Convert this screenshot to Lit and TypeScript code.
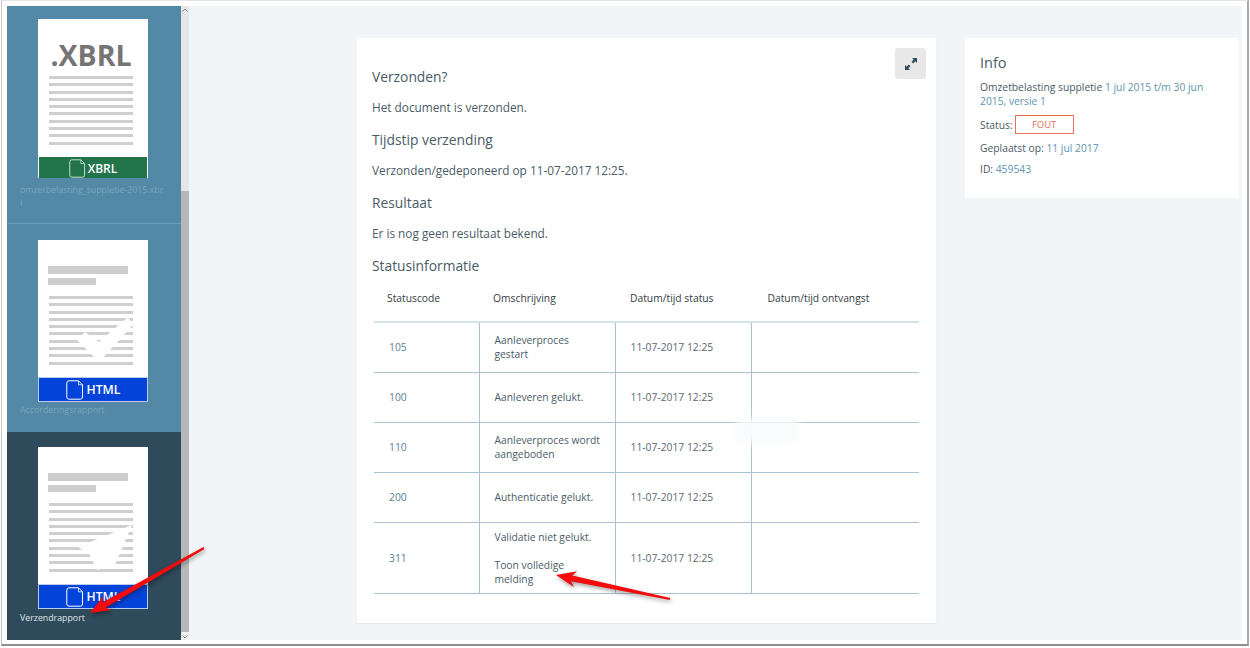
import { LitElement, html, css, svg } from "lit";
import { customElement } from "lit/decorators.js";

function arrow(tx: number, ty: number, x: number, y: number) {
  const dx = x - tx, dy = y - ty;
  const len = Math.hypot(dx, dy);
  const ux = dx / len, uy = dy / len;
  const nx = -uy, ny = ux;
  const p = (along: number, side: number) =>
    `${(tx + ux * along + nx * side).toFixed(1)},${(ty + uy * along + ny * side).toFixed(1)}`;
  const h = len - 19;
  return [p(0, 1), p(h + 3, 3), p(h - 1, 8), p(len, 0), p(h - 1, -8), p(h + 3, -3), p(0, -1)].join(" ");
}

const FILE = svg`<path d="M3 .8h9.5l4 4V17a2.2 2.2 0 0 1-2.2 2.2H3A2.2 2.2 0 0 1 .8 17V3A2.2 2.2 0 0 1 3 .8Z" fill="none" stroke="currentColor" stroke-width="1"/><path d="M12.5 .8v4h4" fill="none" stroke="currentColor" stroke-width=".8"/>`;

@customElement("app-root")
export class AppRoot extends LitElement {
  static styles = css`
    :host { display: block; width: 1250px; height: 648px; position: relative; overflow: hidden; background: #fff;
      font-family: "Open Sans", sans-serif; color: #4a5b67; font-size: 12px; }
    .window { box-sizing: border-box; width: 1248px; height: 646px; margin-left: 1px; padding: 5px 5px 4px 5px; background: #fff;
      border: 1px solid #c4c4c4; border-top-color: #e4e4e4; border-bottom: 2px solid #8f8f8f; border-right: 2px solid #a8a8a8; display: flex; }
    .side { width: 174px; flex: none; display: flex; flex-direction: column; background: #5389a6; }
    .item { box-sizing: border-box; padding: 13px 0 0 31px; color: #77a5bc; font-size: 8.8px; line-height: 13px; }
    .item.one { height: 218px; border-bottom: 1px solid #6c9cb6; }
    .item.two { height: 208px; padding-top: 16px; }
    .item.three { flex: 1; padding-top: 15px; background: #2f4a5b; color: #dfe7ec; }
    .label { margin: 6px 0 0 -18px; width: 145px; word-break: break-all; }
    .two .label { margin-top: 3px; }
    .three .label { margin-top: 4px; }
    .thumb { position: relative; width: 110px; height: 159px; background: #fff; box-sizing: border-box; display: flex; flex-direction: column; }
    .two .thumb, .three .thumb { height: 161px; }
    .doc { flex: 1; padding: 0 15px 0 11px; display: flex; flex-direction: column; }
    .ext { font-weight: 700; font-size: 28.5px; line-height: 30px; color: #757575; text-align: center; margin: 21px -15px 0 -11px; padding-right: 4px; height: 36px; }
    .t1 { height: 8px; width: 80px; background: #cdcdcd; margin-top: 26px; margin-left: -1px; }
    .t2 { height: 7px; width: 48px; background: #cdcdcd; margin: 4px 0 11px -1px; }
    .lines { display: flex; flex-direction: column; gap: 4.3px; }
    .lines i { display: block; height: 3px; background: #cfcfcf; }
    .bar { height: 23px; margin: 0 1px; flex: none; display: flex; align-items: center; justify-content: center; gap: 3px;
      color: #fff; font-weight: 600; }
    .bar.x { background: #22744a; height: 21px; font-size: 12px; padding-top: 2px; box-sizing: border-box; gap: 2px; }
    .bar.h { background: #0343d9; outline: 1px solid #b7cbf0; font-size: 12.2px; padding-bottom: 1px; box-sizing: border-box; }
    .bar svg { width: 18px; height: 20px; flex: none; }
    .bar.h svg { margin-top: 1px; }
    .bar.x svg { color: #cfe3d8; width: 17px; height: 19px; margin-top: -1px; }
    .check { position: absolute; left: 0; top: 0; width: 110px; height: 161px; pointer-events: none; }
    .scroll { width: 8px; flex: none; background: #e6e6e6; display: flex; flex-direction: column; }
    .sb-top { height: 185px; display: flex; justify-content: center; }
    .sb-bot { flex: 1; background: #f1f1f1; display: flex; justify-content: center; align-items: center; }
    .sb-top svg, .sb-bot svg { width: 6px; height: 4px; color: #8a8a8a; margin-top: 2px; }
    .thumbbar { height: 441px; background: #b7b7b7; }
    .main { flex: 1; background: #f1f5f8; display: flex; padding: 32px 0 17px 168px; gap: 29px; align-items: flex-start; }
    .panel { box-sizing: border-box; width: 579px; height: 585px; background: #fff; padding: 28.5px 15px 0; position: relative; box-shadow: 0 1px 1px #e4e7e9; }
    .expand { position: absolute; right: 10px; top: 10px; width: 31px; height: 31px; border-radius: 3px; background: #e8e8e8; display: flex; align-items: center; justify-content: center; }
    .expand svg { width: 14px; height: 14px; color: #2f4a5b; }
    h2 { font-weight: 400; font-size: 13.8px; line-height: 20px; margin: 0 0 10px; color: #4a5b67; }
    p { margin: 0 0 13.2px; line-height: 20px; font-size: 11.8px; }
    h2:last-of-type { margin-bottom: 11px; }
    table { border-collapse: collapse; table-layout: fixed; width: 545px; margin: -5px 0 0 2px; font-size: 10.3px; line-height: 14px; }
    th { font-weight: 400; text-align: left; height: 32px; padding: 0 10px 7px 13px; color: #333d44; border-bottom: 2px solid #d5e2ea; }
    th:nth-child(2) { padding-left: 14px; }
    th:nth-child(3) { padding-left: 15px; }
    th:nth-child(4) { padding-left: 16.5px; }
    td { padding: 0 15px; height: 49px; border-bottom: 1px solid #a9c2d0; border-left: 1px solid #a9c2d0; box-sizing: border-box; }
    td:nth-child(2) { padding-right: 13px; }
    td:first-child { border-left: 0; color: #587f95; }
    td.time { color: #5a6972; }
    td div + div { margin-top: 14px; }
    .info { box-sizing: border-box; width: 274px; height: 160px; background: #fff; padding: 15px; font-size: 10.3px; line-height: 14px; }
    .info h3 { font-weight: 400; font-size: 14.5px; line-height: 20px; margin: 0 0 7px; color: #4a5b67; }
    .info a { color: #5f93ae; }
    .info div { margin-bottom: 7px; }
    .info .status { display: flex; align-items: center; gap: 2px; margin-bottom: 7px; }
    .fout { box-sizing: border-box; display: inline-block; width: 59px; height: 19px; line-height: 17px; text-align: center; border: 1px solid #e8705c; color: #e8705c; font-size: 9.5px; }
    .over { position: absolute; inset: 0; width: 1250px; height: 648px; pointer-events: none; }
    .smudge { position: absolute; left: 735px; top: 419px; width: 64px; height: 24px; background: #fafbfc; filter: blur(4px); }
    .shadow { filter: drop-shadow(1px 2px 2px rgba(0,0,0,.4)); }
  `;

  private thumb(kind: "x" | "h", title: boolean, check: string) {
    return html`<div class="thumb">
      <div class="doc">
        ${title ? html`<div class="t1"></div><div class="t2"></div>` : html`<div class="ext">.XBRL</div>`}
        <div class="lines">${Array.from({ length: 10 }).map(() => html`<i></i>`)}</div>
      </div>
      ${check ? html`<svg class="check" viewBox="0 0 110 161">${svg`<path d=${check} fill="#fff"/>`}</svg>` : ""}
      <div class="bar ${kind}"><svg viewBox="0 0 18 20">${FILE}</svg>${kind === "x" ? "XBRL" : "HTML"}</div>
    </div>`;
  }

  render() {
    const rows: [string, string[]][] = [
      ["105", ["Aanleverproces gestart"]],
      ["100", ["Aanleveren gelukt."]],
      ["110", ["Aanleverproces wordt aangeboden"]],
      ["200", ["Authenticatie gelukt."]],
      ["311", ["Validatie niet gelukt.", "Toon volledige melding"]],
    ];
    return html`
      <div class="window">
        <div class="side">
          <div class="item one">${this.thumb("x", false, "")}<div class="label">omzetbelasting_suppletie-2015.xbrl</div></div>
          <div class="item two">${this.thumb("h", true, "M39 100 47 92 61 102 90 77 95 85 61 122Z")}<div class="label">Accorderingsrapport</div></div>
          <div class="item three">${this.thumb("h", true, "M40 100 94 78 77 118 59 123 52 108Z")}<div class="label">Verzendrapport</div></div>
        </div>
        <div class="scroll">
          <div class="sb-top"><svg viewBox="0 0 6 4"><path d="M.5 3.5 3 1l2.5 2.5" fill="none" stroke="currentColor"/></svg></div>
          <div class="thumbbar"></div>
          <div class="sb-bot"><svg viewBox="0 0 6 4"><path d="M.5.5 3 3 5.5.5" fill="none" stroke="currentColor"/></svg></div>
        </div>
        <div class="main">
          <section class="panel">
            <div class="expand"><svg viewBox="0 0 14 14"><path d="M8 1h5v5l-1.7-1.7-2.1 2.1-1.6-1.6 2.1-2.1ZM6 13H1V8l1.7 1.7 2.1-2.1 1.6 1.6-2.1 2.1Z" fill="currentColor"/></svg></div>
            <h2>Verzonden?</h2><p>Het document is verzonden.</p>
            <h2>Tijdstip verzending</h2><p>Verzonden/gedeponeerd op 11-07-2017 12:25.</p>
            <h2>Resultaat</h2><p>Er is nog geen resultaat bekend.</p>
            <h2>Statusinformatie</h2>
            <table>
              <colgroup><col style="width:105px"/><col style="width:136px"/><col style="width:136px"/><col style="width:168px"/></colgroup>
              <thead><tr><th>Statuscode</th><th>Omschrijving</th><th>Datum/tijd status</th><th>Datum/tijd ontvangst</th></tr></thead>
              <tbody>
                ${rows.map(([c, d], i) => html`<tr style=${i === 4 ? "height:71px" : "height:50px"}><td>${c}</td><td>${d.map((x) => html`<div>${x}</div>`)}</td><td class="time">11-07-2017 12:25</td><td></td></tr>`)}
              </tbody>
            </table>
          </section>
          <aside class="info">
            <h3>Info</h3>
            <div>Omzetbelasting suppletie <a>1 jul 2015 t/m 30 jun 2015, versie 1</a></div>
            <div class="status">Status: <span class="fout">FOUT</span></div>
            <div>Geplaatst op: <a>11 jul 2017</a></div>
            <div>ID: <a>459543</a></div>
          </aside>
        </div>
      </div>
      <div class="smudge"></div>
      <svg class="over" viewBox="0 0 1250 648">
        <g class="shadow" fill="#f40b0b">
          <polygon points=${arrow(204, 548, 90, 613)}></polygon>
          <polygon points=${arrow(670, 599, 556, 575)}></polygon>
        </g>
      </svg>`;
  }
}
